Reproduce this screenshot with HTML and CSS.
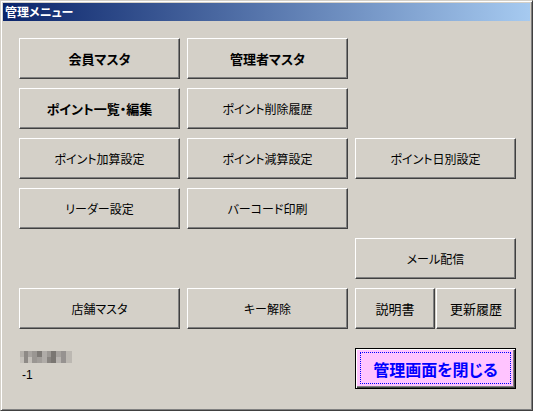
FILE: index.html
```html
<!DOCTYPE html>
<html lang="ja">
<head>
    <meta charset="UTF-8">
    <meta name="viewport" content="width=device-width, initial-scale=1.0">
    <title>管理メニュー</title>
    <link rel="stylesheet" href="styles.css">
</head>
<body>

<div class="window">
    <div class="title-bar">管理メニュー</div>

    <div class="content">
        <div class="menu-grid">
            <button class="btn bold">会員マスタ</button>
            <button class="btn bold">管理者マスタ</button>
            <div></div>

            <button class="btn bold">ポイント一覧・編集</button>
            <button class="btn">ポイント削除履歴</button>
            <div></div>

            <button class="btn">ポイント加算設定</button>
            <button class="btn">ポイント減算設定</button>
            <button class="btn">ポイント日別設定</button>

            <button class="btn">リーダー設定</button>
            <button class="btn">バーコード印刷</button>
            <div></div>

            <div></div>
            <div></div>
            <button class="btn">メール配信</button>

            <button class="btn">店舗マスタ</button>
            <button class="btn">キー解除</button>
            <div class="split">
                <button class="btn">説明書</button>
                <button class="btn">更新履歴</button>
            </div>
        </div>

        <div class="footer">
            <div class="info">
                <svg class="redacted" width="52" height="12" viewBox="0 0 52 12">
                    <rect x="0" y="0" width="52" height="12" fill="#c4c0ba"/>
                    <rect x="0" y="0" width="4" height="6" fill="#b4b0aa"/>
                    <rect x="4" y="0" width="4" height="12" fill="#8e8a86"/>
                    <rect x="8" y="0" width="4" height="6" fill="#a8a4a0"/>
                    <rect x="12" y="0" width="5" height="12" fill="#9a9692"/>
                    <rect x="17" y="0" width="5" height="6" fill="#7e7a76"/>
                    <rect x="17" y="6" width="5" height="6" fill="#a29e9a"/>
                    <rect x="22" y="0" width="5" height="12" fill="#b0aca8"/>
                    <rect x="27" y="0" width="4" height="6" fill="#9c9894"/>
                    <rect x="27" y="6" width="4" height="6" fill="#888480"/>
                    <rect x="31" y="0" width="5" height="12" fill="#7a7672"/>
                    <rect x="36" y="0" width="5" height="6" fill="#a6a29e"/>
                    <rect x="36" y="6" width="5" height="6" fill="#b8b4b0"/>
                    <rect x="41" y="0" width="5" height="12" fill="#969290"/>
                    <rect x="46" y="0" width="6" height="12" fill="#bcb8b2"/>
                </svg>
                <div class="code">-1</div>
            </div>
            <div></div>
            <button class="btn close">管理画面を閉じる</button>
        </div>
    </div>
</div>

</body>
</html>
```

FILE: styles.css
```css
body {
    margin: 0;
    background-color: #d4d0c8;
    font-family: "Noto Sans CJK JP", "Noto Sans", sans-serif;
}
.window {
    width: 533px;
    height: 411px;
    box-sizing: border-box;
    border: 1px solid;
    border-color: #d4d0c8 #404040 #404040 #d4d0c8;
    box-shadow: inset 1px 1px #fff, inset -1px -1px #808080;
    padding: 2px;
    background-color: #d4d0c8;
}
.title-bar {
    height: 18px;
    line-height: 18px;
    padding-left: 2px;
    background: linear-gradient(to right, #0a246a, #a6caf0);
    color: #fff;
    font-size: 12px;
    font-weight: bold;
    font-feature-settings: "palt";
}
.content {
    padding: 17px 0 0 16px;
}
.menu-grid, .footer {
    display: grid;
    grid-template-columns: repeat(3, 161px);
    column-gap: 7px;
}
.menu-grid {
    grid-auto-rows: 41px;
    row-gap: 9px;
}
.btn {
    margin: 0;
    padding: 0;
    border: 1px solid;
    border-color: #fff #404040 #404040 #fff;
    box-shadow: inset -1px -1px #808080;
    background-color: #d4d0c8;
    color: #000;
    font-family: "Noto Sans CJK JP", sans-serif;
    font-size: 12px;
    font-feature-settings: "palt";
    cursor: pointer;
}
.btn.bold {
    font-size: 13px;
    font-weight: bold;
}
.split {
    display: flex;
    gap: 1px;
}
.split .btn {
    flex: 1;
    font-size: 13px;
}
.footer {
    margin-top: 19px;
}
.info {
    padding: 3px 0 0 1px;
}
.redacted {
    display: block;
}
.code {
    margin-top: 5px;
    padding-left: 2px;
    font-family: "Liberation Sans", sans-serif;
    font-size: 12px;
    line-height: 14px;
    color: #000;
}
.close {
    position: relative;
    height: 41px;
    border: 1px solid #000;
    box-shadow: inset 1px 1px #fff, inset -1px -1px #404040, inset -2px -2px #808080;
    background-color: #ffc4ff;
    color: #0000ff;
    font-size: 16px;
    font-weight: bold;
}
.close::after {
    content: "";
    position: absolute;
    top: 3px;
    left: 4px;
    right: 4px;
    bottom: 4px;
    border: 1px dotted #0000ff;
}
```
